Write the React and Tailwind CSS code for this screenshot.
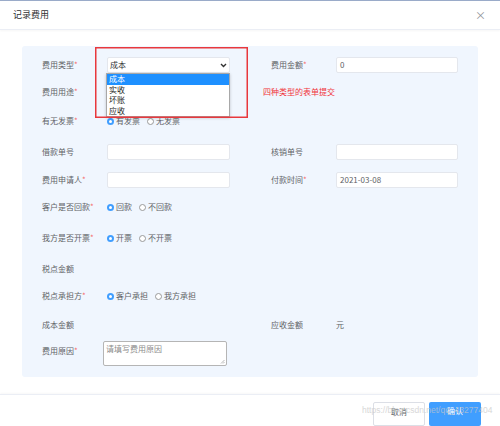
import React from 'react';

const Req = () => <span className="text-[#f56c6c]">*</span>;

function Label({ text, req, className = '' }) {
  return (
    <div className={`w-[65px] shrink-0 text-[8px] leading-none text-[#606266] ${className}`}>
      {text}
      {req && <Req />}
    </div>
  );
}

function Input({ value, w = 'w-[123px]' }) {
  return (
    <div className={`${w} h-[16px] bg-white border border-[#e4e7ed] rounded-[2px] flex items-center px-[3px] text-[8px] text-[#606266]`}>
      {value}
    </div>
  );
}

function Radio({ checked, label, last }) {
  return (
    <span className={`flex items-center gap-[2px] ${last ? '' : 'mr-[7px]'}`}>
      {checked ? (
        <span className="w-[7px] h-[7px] rounded-full bg-[#409eff] flex items-center justify-center">
          <span className="w-[3px] h-[3px] rounded-full bg-white" />
        </span>
      ) : (
        <span className="w-[7px] h-[7px] rounded-full border border-[#9a9a9a] bg-white" />
      )}
      <span className="text-[8px] leading-none text-[#606266]">{label}</span>
    </span>
  );
}

const options = ['成本', '实收', '坏账', '应收'];

function Row({ h, left, right, align = 'items-center' }) {
  return (
    <div className={`flex ${align} ${h}`}>
      <div className={`flex ${align} w-[229px] shrink-0`}>{left}</div>
      <div className={`flex ${align}`}>{right}</div>
    </div>
  );
}

export default function App() {
  return (
    <div className="w-[500px] h-[426px] bg-white overflow-hidden relative font-['Noto_Sans_CJK_SC','Noto_Sans',sans-serif]">
      <div className="h-[1px] bg-[#9aabc9]" />
      <div className="h-[29px] flex items-center justify-between pl-[13px] pr-[14px] border-b border-[#ebeef5] shadow-[0_1px_2px_rgba(0,0,0,0.04)]">
        <span className="text-[9px] text-[#303133]">记录费用</span>
        <span className="text-[11px] text-[#909399] leading-none">×</span>
      </div>

      <div className="pt-[16px] px-[22px] pb-[17px]">
        <div className="relative h-[331px] bg-[#f0f6fe] rounded-[3px] pt-[5px] pl-[20px]">
          <Row
            h="h-[28px]"
            left={
              <>
                <Label text="费用类型" req />
                <div className="relative">
                  <div className="w-[123px] h-[16px] bg-white border border-[#e4e7ed] rounded-[2px] flex items-center justify-between px-[2px] text-[8px] text-[#303133]">
                    <span>成本</span>
                    <svg width="7" height="5" viewBox="0 0 7 5">
                      <path d="M1 1l2.5 2.5L6 1" stroke="#333" strokeWidth="1.4" fill="none" />
                    </svg>
                  </div>
                  <div className="absolute left-[-1px] top-[16px] w-[124px] bg-white border border-[#a8a8a8] shadow-[0_1px_3px_rgba(0,0,0,0.2)] z-10">
                    {options.map((o, i) => (
                      <div
                        key={o}
                        className={`h-[10.5px] flex items-center px-[2px] text-[8px] leading-none ${i === 0 ? 'bg-[#1e90ff] text-white' : 'text-[#222]'}`}
                      >
                        {o}
                      </div>
                    ))}
                  </div>
                </div>
              </>
            }
            right={
              <>
                <Label text="费用金额" req />
                <Input value="0" w="w-[122px]" />
              </>
            }
          />
          <Row
            h="h-[26px]"
            left={<Label text="费用用途" req />}
            right={<span className="ml-[-8px] text-[8px] leading-none text-[#f0333a]">四种类型的表单提交</span>}
          />
          <Row
            h="h-[32px]"
            left={
              <>
                <Label text="有无发票" req />
                <Radio checked label="有发票" />
                <Radio label="无发票" last />
              </>
            }
          />
          <Row
            h="h-[30px]"
            left={
              <>
                <Label text="借款单号" />
                <Input />
              </>
            }
            right={
              <>
                <Label text="核销单号" />
                <Input w="w-[122px]" />
              </>
            }
          />
          <Row
            h="h-[26px]"
            left={
              <>
                <Label text="费用申请人" req />
                <Input />
              </>
            }
            right={
              <>
                <Label text="付款时间" req />
                <Input value="2021-03-08" w="w-[122px]" />
              </>
            }
          />
          <Row
            h="h-[28px]"
            left={
              <>
                <Label text="客户是否回款" req />
                <Radio checked label="回款" />
                <Radio label="不回款" last />
              </>
            }
          />
          <Row
            h="h-[34px]"
            left={
              <>
                <Label text="我方是否开票" req />
                <Radio checked label="开票" />
                <Radio label="不开票" last />
              </>
            }
          />
          <Row h="h-[28px]" left={<Label text="税点金额" />} />
          <Row
            h="h-[26px]"
            left={
              <>
                <Label text="税点承担方" req />
                <Radio checked label="客户承担" />
                <Radio label="我方承担" last />
              </>
            }
          />
          <Row
            h="h-[32px]"
            left={<Label text="成本金额" />}
            right={
              <>
                <Label text="应收金额" />
                <span className="text-[8px] leading-none text-[#606266]">元</span>
              </>
            }
          />
          <Row
            h="h-[26px]"
            align="items-start"
            left={
              <>
                <Label text="费用原因" req className="mt-[6px]" />
                <div className="relative ml-[-4px] w-[124px] h-[25px] bg-white border border-[#b5b5b5] rounded-[2px] px-[2px] pt-[3px] text-[8px] leading-none text-[#8c8c8c]">
                  请填写费用原因
                  <svg className="absolute right-[1px] bottom-[1px]" width="5" height="5" viewBox="0 0 5 5">
                    <path d="M4.5 1L1 4.5M4.5 3L3 4.5" stroke="#999" strokeWidth="0.7" />
                  </svg>
                </div>
              </>
            }
          />

          {/* red annotation box */}
          <div className="absolute left-[73px] top-[1px] w-[153px] h-[71px] shadow-[inset_0_0_0_1.5px_#e8383d] z-20 pointer-events-none" />
        </div>
      </div>

      <div className="border-t border-[#ebeef5] shadow-[0_-1px_2px_rgba(0,0,0,0.03)] flex justify-end gap-[4px] pr-[19px] pt-[7px]">
        <div className="w-[52px] h-[24px] bg-white border border-[#dcdfe6] rounded-[2px] flex justify-center pt-[3px] text-[8px] text-[#606266]">
          取消
        </div>
        <div className="w-[52px] h-[24px] bg-[#409eff] rounded-[2px] flex justify-center pt-[3px] text-[8px] text-white">
          确认
        </div>
      </div>

      <div className="absolute left-[362px] top-[404px] text-[8.5px] text-[#c8c8c8] opacity-70 font-['Liberation_Sans',sans-serif] whitespace-nowrap pointer-events-none">
        https://blog.csdn.net/qq_43277404
      </div>
    </div>
  );
}
